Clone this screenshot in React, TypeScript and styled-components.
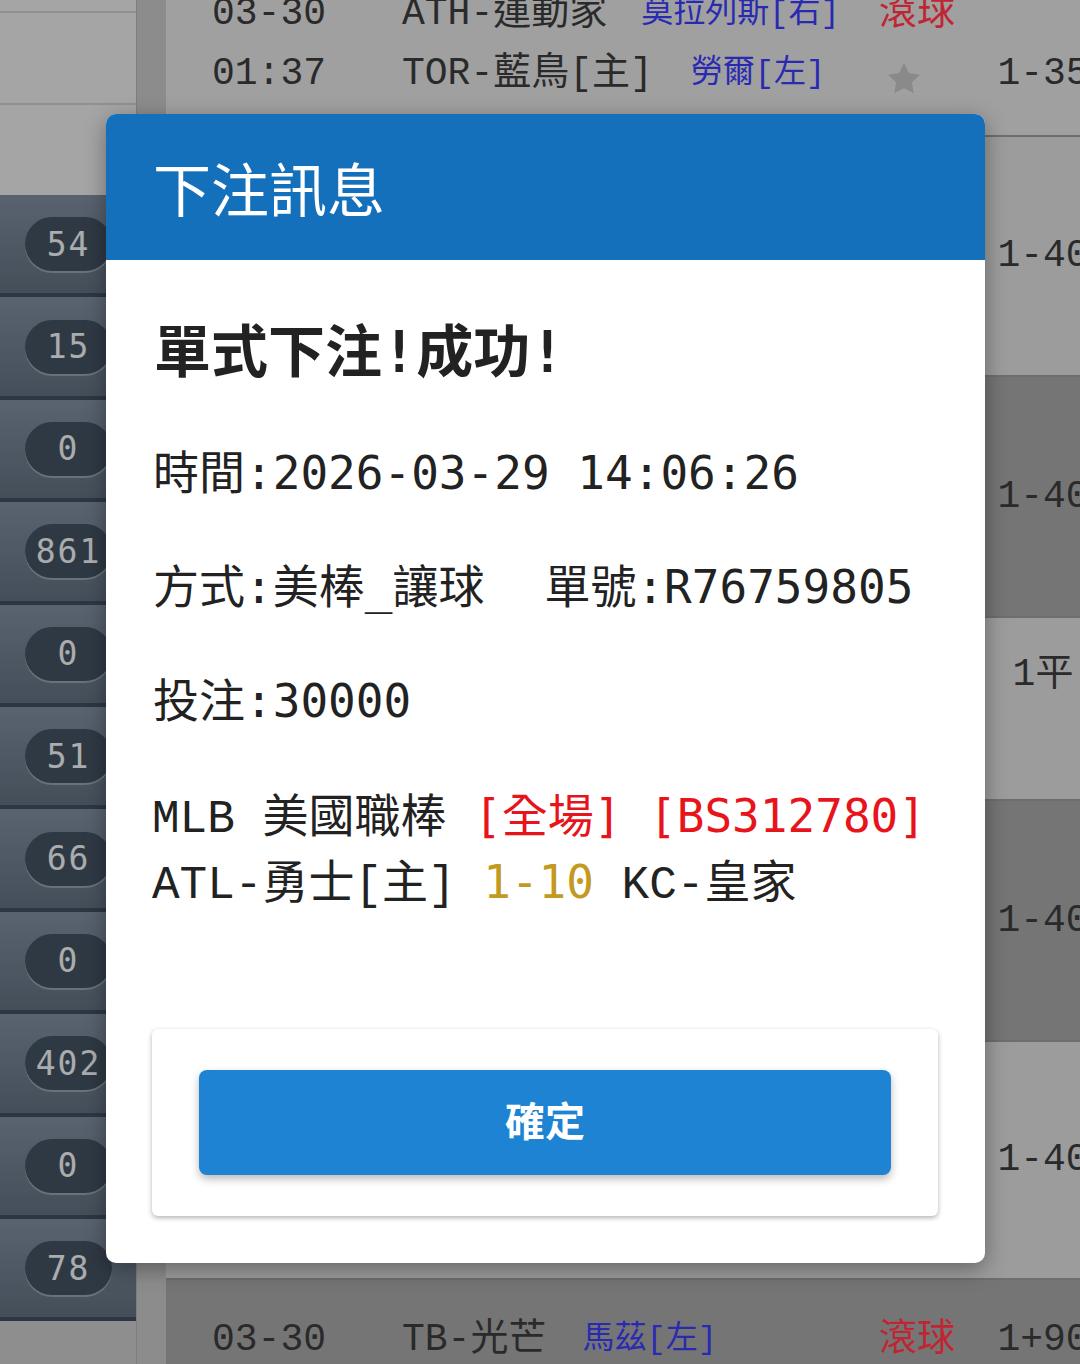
import React from "react";
import styled, { createGlobalStyle } from "styled-components";

const GlobalStyle = createGlobalStyle`
  html, body {
    margin: 0;
    padding: 0;
    width: 1080px;
    height: 1364px;
    overflow: hidden;
    background: #c8c8c8;
  }
  body {
    font-family: "Noto Sans CJK TC", "Noto Sans", sans-serif;
  }
  * { box-sizing: border-box; }
`;

const Page = styled.div`
  position: relative;
  width: 1080px;
  height: 1364px;
  overflow: hidden;
  display: flex;
  background: #bbbbbb;
`;

/* ---------- left column ---------- */

const LeftColumn = styled.aside`
  flex: none;
  width: 137px;
  display: flex;
  flex-direction: column;
  background: #bebebe;
  border-right: 1px solid #a8a8a8;
`;

const TopCell = styled.div<{ $h: number; $last?: boolean }>`
  height: ${(p) => p.$h}px;
  flex: none;
  background: #dcdcdc;
  border-bottom: ${(p) => (p.$last ? "none" : "2px solid #c0c0c0")};
`;

const NavList = styled.nav`
  display: flex;
  flex-direction: column;
`;

const NavItem = styled.div`
  height: 102.4px;
  flex: none;
  display: flex;
  align-items: center;
  padding-left: 25px;
  background: linear-gradient(180deg, #778595 0%, #5b6978 100%);
  border-bottom: 4px solid #3d4958;
`;

const Badge = styled.span`
  width: 87px;
  height: 54px;
  border-radius: 27px;
  background: #3f4c5b;
  box-shadow: 0 2px 0 rgba(255, 255, 255, 0.28);
  display: flex;
  align-items: center;
  justify-content: center;
  color: #e3e6e9;
  font-family: "DejaVu Sans Mono", monospace;
  font-size: 33px;
  letter-spacing: 2px;
`;

/* ---------- main list ---------- */

const Main = styled.main`
  flex: 1;
  min-width: 0;
  padding-left: 29px;
  background: #bbbbbb;
  overflow: hidden;
`;

const Table = styled.div`
  width: 1000px;
  display: flex;
  flex-direction: column;
`;

const tones = {
  top: "#d6d6d6",
  light: "#d0d0d0",
  dark: "#9d9d9d",
};

const Row = styled.div<{ $h: number; $tone: keyof typeof tones; $padTop?: number }>`
  height: ${(p) => p.$h}px;
  flex: none;
  background: ${(p) => tones[p.$tone]};
  border-bottom: 2px solid #939393;
  display: grid;
  grid-template-columns: 190px 477px 118px 92px;
  padding-left: 46px;
  align-items: ${(p) => (p.$padTop ? "start" : "center")};
  padding-top: ${(p) => p.$padTop ?? 0}px;
  font-family: "Liberation Mono", "Noto Sans CJK TC", monospace;
  font-size: 38px;
  line-height: 60px;
  color: #393939;
`;

const StackRow = styled.div<{ $h: number }>`
  height: ${(p) => p.$h}px;
  flex: none;
  background: ${tones.top};
  border-bottom: 2px solid #939393;
  display: flex;
  flex-direction: column;
  justify-content: flex-end;
  padding-bottom: 31px;
  overflow: hidden;
`;

const Line = styled.div`
  flex: none;
  height: 60px;
  display: grid;
  grid-template-columns: 190px 477px 118px 92px;
  padding-left: 46px;
  align-items: center;
  font-family: "Liberation Mono", "Noto Sans CJK TC", monospace;
  font-size: 38px;
  line-height: 60px;
  color: #393939;
  white-space: nowrap;
`;

const Cell = styled.span`
  display: flex;
  align-items: center;
  white-space: nowrap;
`;

const OddsCell = styled.span`
  grid-column: 4;
  text-align: center;
  white-space: nowrap;
`;

const Pitcher = styled.span<{ $gap: number }>`
  margin-left: ${(p) => p.$gap}px;
  color: #3838ed;
  font-size: 32px;
`;

const Live = styled.span`
  color: #ff3344;
`;

const StarIcon = styled.svg`
  width: 38px;
  height: 38px;
  margin-left: 6px;
  margin-top: 10px;
  fill: #b8b8b8;
`;

/* ---------- dialog ---------- */

const Backdrop = styled.div`
  position: absolute;
  inset: 0;
  background: rgba(0, 0, 0, 0.25);
`;

const Dialog = styled.section`
  position: absolute;
  left: 106px;
  top: 114px;
  width: 879px;
  background: #ffffff;
  border-radius: 10px;
  overflow: hidden;
  box-shadow: 0 6px 22px rgba(0, 0, 0, 0.35);
  display: flex;
  flex-direction: column;
`;

const DialogHeader = styled.header`
  height: 146px;
  background: #1470ba;
  display: flex;
  align-items: center;
  padding-left: 47px;
  color: #ffffff;
  font-family: "Noto Sans CJK TC", sans-serif;
  font-size: 58px;
  font-weight: 400;
`;

const DialogBody = styled.div`
  display: flex;
  flex-direction: column;
  padding: 52px 47px 47px 46px;
  color: #222222;
`;

const Headline = styled.h2`
  margin: 0 0 24px 2px;
  height: 80px;
  font-family: "DejaVu Sans Mono", "Noto Sans CJK TC", monospace;
  font-size: 57px;
  line-height: 80px;
  font-weight: 700;
  color: #222222;
`;

const InfoLine = styled.div`
  margin-left: 1px;
  height: 114px;
  font-family: "DejaVu Sans Mono", "Noto Sans CJK TC", monospace;
  font-size: 46px;
  line-height: 114px;
  white-space: pre;
`;

const Spacer = styled.span<{ $w: number }>`
  display: inline-block;
  width: ${(p) => p.$w}px;
`;

const MatchBlock = styled.div`
  margin-top: 25px;
  display: flex;
  flex-direction: column;
`;

const MatchLine = styled.div`
  height: 66px;
  font-family: "Liberation Mono", "Noto Sans CJK TC", monospace;
  font-size: 46px;
  line-height: 66px;
  white-space: pre;
  color: #222222;
`;

const Accent = styled.span<{ $tone: "red" | "gold" }>`
  font-family: "DejaVu Sans Mono", "Noto Sans CJK TC", monospace;
  color: ${(p) => (p.$tone === "red" ? "#e8141c" : "#c29a1f")};
`;

const ActionCard = styled.div`
  margin-top: 114px;
  height: 187px;
  background: #ffffff;
  border-radius: 6px;
  box-shadow: 0 2px 5px rgba(0, 0, 0, 0.3);
  padding: 41px 47px;
  display: flex;
`;

const ConfirmButton = styled.button`
  flex: 1;
  height: 105px;
  padding: 0 0 8px;
  border: none;
  border-radius: 8px;
  background: #1e83d3;
  box-shadow: 0 4px 9px rgba(0, 0, 0, 0.28);
  color: #ffffff;
  font-family: "Noto Sans CJK TC", sans-serif;
  font-size: 40px;
  font-weight: 700;
  cursor: pointer;
`;

const badges = ["54", "15", "0", "861", "0", "51", "66", "0", "402", "0", "78"];

const listRows: { h: number; tone: "light" | "dark"; odds: string; padTop?: number }[] = [
  { h: 240, tone: "light", odds: "1-40" },
  { h: 241, tone: "dark", odds: "1-40" },
  { h: 183, tone: "light", odds: "1平", padTop: 27 },
  { h: 241, tone: "dark", odds: "1-40" },
  { h: 238, tone: "light", odds: "1-40" },
];

const Star = () => (
  <StarIcon viewBox="0 0 24 24">
    <path d="M12 2l3.09 6.26L22 9.27l-5 4.87 1.18 6.88L12 17.77l-6.18 3.25L7 14.14 2 9.27l6.91-1.01L12 2z" />
  </StarIcon>
);

export default function App() {
  return (
    <>
      <GlobalStyle />
      <Page>
        <LeftColumn>
          <TopCell $h={13} />
          <TopCell $h={92} />
          <TopCell $h={90} $last />
          <NavList>
            {badges.map((b, i) => (
              <NavItem key={i}>
                <Badge>{b}</Badge>
              </NavItem>
            ))}
          </NavList>
        </LeftColumn>

        <Main>
          <Table>
            <StackRow $h={137}>
              <Line>
                <Cell>03-30</Cell>
                <Cell>
                  ATH-運動家
                  <Pitcher $gap={34}>莫拉列斯[右]</Pitcher>
                </Cell>
                <Cell>
                  <Live>滾球</Live>
                </Cell>
              </Line>
              <Line>
                <Cell>01:37</Cell>
                <Cell>
                  TOR-藍鳥[主]
                  <Pitcher $gap={38}>勞爾[左]</Pitcher>
                </Cell>
                <Cell>
                  <Star />
                </Cell>
                <OddsCell>1-35</OddsCell>
              </Line>
            </StackRow>

            {listRows.map((r, i) => (
              <Row key={i} $h={r.h} $tone={r.tone} $padTop={r.padTop}>
                <OddsCell>{r.odds}</OddsCell>
              </Row>
            ))}

            <Row $h={120} $tone="dark" $padTop={30}>
              <Cell>03-30</Cell>
              <Cell>
                TB-光芒
                <Pitcher $gap={36}>馬茲[左]</Pitcher>
              </Cell>
              <Cell>
                <Live>滾球</Live>
              </Cell>
              <OddsCell>1+90</OddsCell>
            </Row>
          </Table>
        </Main>

        <Backdrop />

        <Dialog role="dialog" aria-label="下注訊息">
          <DialogHeader>下注訊息</DialogHeader>
          <DialogBody>
            <Headline>單式下注!成功!</Headline>
            <InfoLine>時間:2026-03-29 14:06:26</InfoLine>
            <InfoLine>
              方式:美棒_讓球
              <Spacer $w={60} />
              單號:R76759805
            </InfoLine>
            <InfoLine>投注:30000</InfoLine>
            <MatchBlock>
              <MatchLine>
                MLB 美國職棒 <Accent $tone="red">[全場]</Accent>{" "}
                <Accent $tone="red">[BS312780]</Accent>
              </MatchLine>
              <MatchLine>
                ATL-勇士[主] <Accent $tone="gold">1-10</Accent> KC-皇家
              </MatchLine>
            </MatchBlock>
            <ActionCard>
              <ConfirmButton type="button">確定</ConfirmButton>
            </ActionCard>
          </DialogBody>
        </Dialog>
      </Page>
    </>
  );
}
